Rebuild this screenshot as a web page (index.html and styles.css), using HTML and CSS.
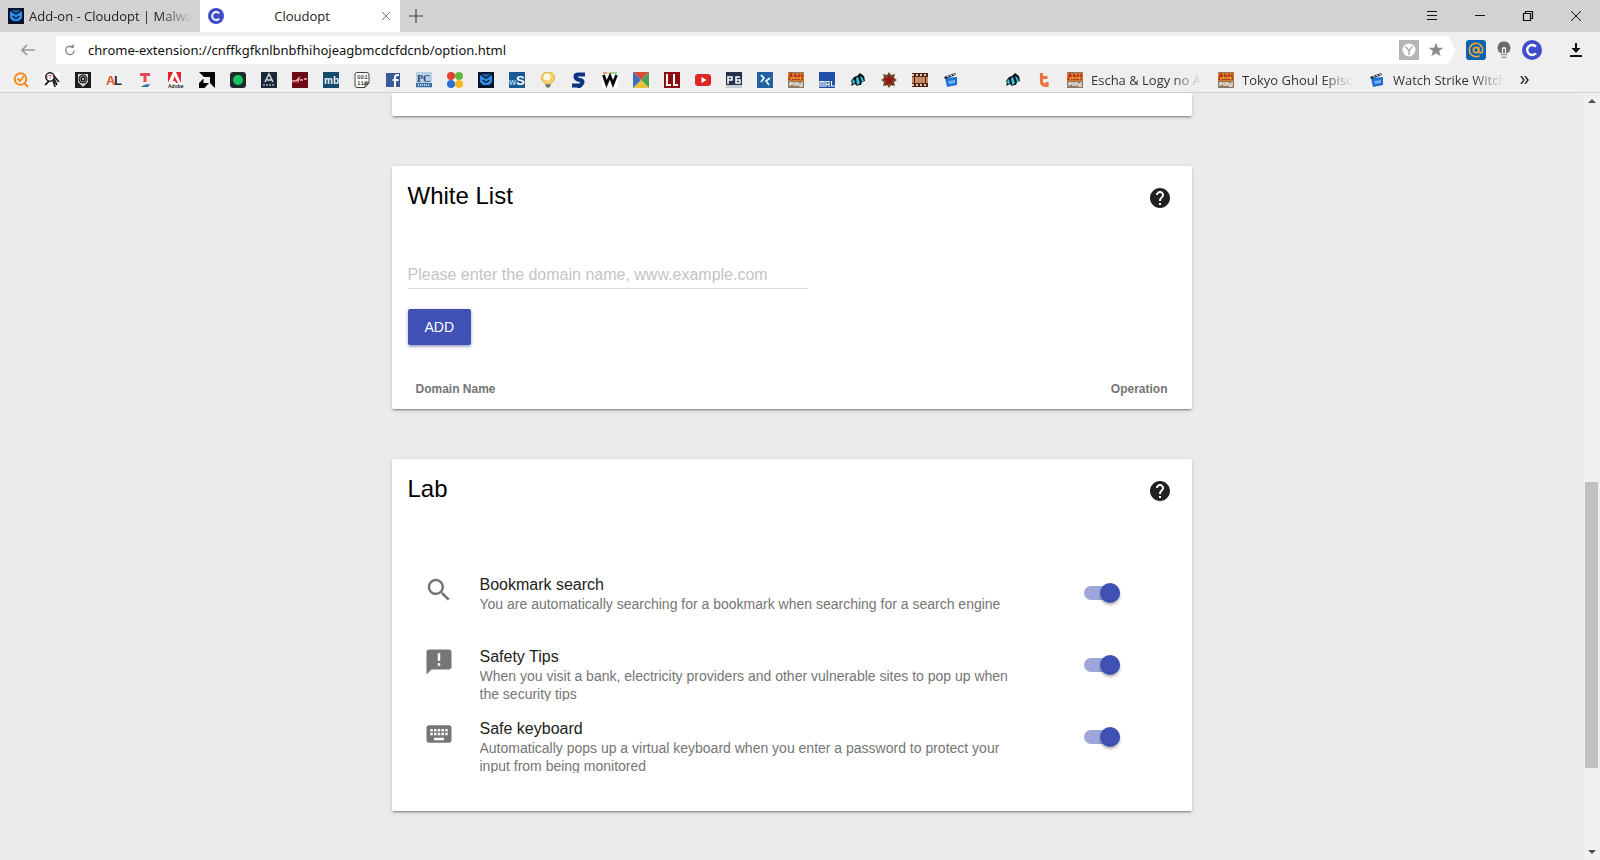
FILE: index.html
```html
<!DOCTYPE html>
<html lang="en">
<head>
    <meta charset="UTF-8">
    <meta name="viewport" content="width=device-width, initial-scale=1.0">
    <title>Cloudopt</title>
    <link rel="stylesheet" href="styles.css">
</head>
<body>

    <!-- Shared icons -->
    <svg class="defs" aria-hidden="true">
        <symbol id="i-cloudopt" viewBox="0 0 16 16">
            <circle cx="8" cy="8" r="8" fill="#3f4dcb"/>
            <path d="M11.2 5.4A4 4 0 1 0 11.2 10.6" fill="none" stroke="#fff" stroke-width="1.9"/>
        </symbol>
        <symbol id="i-malware" viewBox="0 0 16 16">
            <rect width="16" height="16" fill="#06142b"/>
            <path d="M2 3l6 4 6-4v7l-3 3H5l-3-3z" fill="#2f8fee"/>
            <path d="M3 2h10L8 5.500z" fill="#1c5fae"/>
            <path d="M4.500 8 8 10.500 11.500 8" fill="none" stroke="#06142b" stroke-width="1.3"/>
        </symbol>
        <symbol id="i-anime" viewBox="0 0 16 16">
            <rect width="16" height="16" fill="#8b7a66"/>
            <rect y="1" width="16" height="8" fill="#d9772b"/>
            <path d="M1 8 3 2l2 6M7 8V3l2 2v3M11 2v6M14 2v6" fill="none" stroke="#b02c12" stroke-width="1.5"/>
            <path d="M2 6h12" stroke="#f5cf4a"/>
            <path d="M2 14v-3h2v2M6 14v-4M8 14v-3h2v3M12 11v3h2v-4" fill="none" stroke="#f1ece2" stroke-width="1.3"/>
        </symbol>
        <symbol id="i-fish" viewBox="0 0 16 16">
            <path d="M1 9 4 5l3-1 3-3 4 3 1 5-3 1-1 3H9l-2 1-2-2-4 2 1-3z" fill="#0a1216"/>
            <path d="M2 9l2-2 1 4-2 1zM6 6l2-1 2 6-1 1-2 1zM10 4l2 1 2 4-2 1z" fill="#35c4dd"/>
        </symbol>
        <symbol id="i-clapper" viewBox="0 0 16 16">
            <path d="M2 6 14 5v8L4 15z" fill="#1f6fd0"/>
            <path d="M1 5 12 1l1 2L2 7z" fill="#23303f"/>
            <path d="M4 4l2 1M7 3l2 1M10 2l2 1" stroke="#e8edf4"/>
            <path d="M5 9l7-1v3l-6 1z" fill="#73b3f4"/>
        </symbol>
        <symbol id="i-help" viewBox="0 0 24 24">
            <path d="M12 2C6.480 2 2 6.480 2 12s4.480 10 10 10 10-4.480 10-10S17.520 2 12 2zm1 17h-2v-2h2v2zm2.070-7.750l-.9.920C13.450 12.900 13 13.500 13 15h-2v-.5c0-1.100.45-2.100 1.170-2.830l1.240-1.260c.37-.36.59-.86.59-1.410 0-1.100-.9-2-2-2s-2 .9-2 2H8c0-2.210 1.790-4 4-4s4 1.790 4 4c0 .88-.36 1.680-.93 2.250z"/>
        </symbol>
    </svg>

    <!-- Tabs -->
    <header class="tab-bar">
        <a class="tab" href="#">
            <svg class="favicon"><use href="#i-malware"/></svg>
            <span class="tab-title fade">Add-on - Cloudopt | Malware</span>
        </a>
        <div class="tab active">
            <svg class="favicon"><use href="#i-cloudopt"/></svg>
            <a class="tab-title centered" href="#">Cloudopt</a>
            <button class="tab-close" aria-label="Close tab">
                <svg width="10" height="10" viewBox="0 0 10 10"><path d="M1 1l8 8M9 1 1 9" stroke="#777"/></svg>
            </button>
        </div>
        <button class="new-tab" aria-label="New tab">
            <svg width="14" height="14" viewBox="0 0 14 14"><path d="M7 0v14M0 7h14" stroke="#444" stroke-width="1.2"/></svg>
        </button>
        <div class="window-buttons">
            <button aria-label="Menu"><svg width="12" height="12" viewBox="0 0 12 12"><path d="M1 1.500h10M1 5.500h10M1 9.500h10" stroke="#111"/></svg></button>
            <button aria-label="Minimize"><svg width="12" height="12" viewBox="0 0 12 12"><path d="M1 5.500h10" stroke="#111"/></svg></button>
            <button aria-label="Restore"><svg width="12" height="12" viewBox="0 0 12 12"><path d="M1.500 3.500h7v7h-7zM3.500 3.500v-2h7v7h-2" fill="none" stroke="#111" stroke-width="1.2"/></svg></button>
            <button aria-label="Close"><svg width="12" height="12" viewBox="0 0 12 12"><path d="M1 1l10 10M11 1 1 11" stroke="#111"/></svg></button>
        </div>
    </header>

    <!-- Address bar -->
    <div class="toolbar">
        <button class="back" aria-label="Back">
            <svg width="16" height="12" viewBox="0 0 16 12"><path d="M15 6H2M7 1 2 6l5 5" fill="none" stroke="#999" stroke-width="1.7"/></svg>
        </button>
        <div class="address">
            <button class="reload" aria-label="Reload">
                <svg width="12" height="12" viewBox="0 0 12 12"><path d="M9.200 3.600A4.200 4.200 0 1 0 10.200 6.400" fill="none" stroke="#888" stroke-width="1.3"/><path d="M5.500 3.800h4.300V0z" fill="#888"/></svg>
            </button>
            <input class="url" type="text" aria-label="Address" value="chrome-extension://cnffkgfknlbnbfhihojeagbmcdcfdcnb/option.html">
            <button aria-label="Protect">
                <svg width="20" height="20" viewBox="0 0 20 20"><rect width="20" height="20" fill="#b4b4b4"/><circle cx="10" cy="10" r="6.500" fill="#fff"/><path d="M6.500 6.500 10 10.500l3.500-4M10 10.500V15" fill="none" stroke="#aaa" stroke-width="1.4"/></svg>
            </button>
            <button aria-label="Bookmark">
                <svg width="16" height="16" viewBox="0 0 16 16"><path d="M8 .8l2 5h5.300l-4.200 3.300 1.600 5.200L8 11.200l-4.700 3.100 1.600-5.200L.7 5.800H6z" fill="#8d8d8d"/></svg>
            </button>
        </div>
        <div class="extensions">
            <button aria-label="Mail">
                <svg width="20" height="20" viewBox="0 0 20 20"><rect width="20" height="20" rx="3" fill="#0d62b4"/><circle cx="10" cy="10" r="2.700" fill="none" stroke="#f3a738" stroke-width="1.7"/><path d="M12.700 7v4.500c0 2.200 4 1.800 4-1.500a6.700 6.700 0 1 0-3.200 5.700" fill="none" stroke="#f3a738" stroke-width="1.6"/></svg>
            </button>
            <button aria-label="Lights">
                <svg width="20" height="20" viewBox="0 0 20 20"><path d="M10 1.500a6.300 6.300 0 0 0-3.500 11.600h7A6.300 6.300 0 0 0 10 1.500z" fill="#6a6a6a"/><path d="M8.500 13V8.500q1.500-1.500 3 0V13" fill="none" stroke="#fff" stroke-width="1.2"/><path d="M6.500 14.500h7M7.500 17.200h5" stroke="#999" stroke-width="1.5"/></svg>
            </button>
            <button aria-label="Cloudopt"><svg width="20" height="20"><use href="#i-cloudopt"/></svg></button>
        </div>
        <button class="downloads" aria-label="Downloads">
            <svg width="20" height="20" viewBox="0 0 20 20"><path d="M10 3v7" stroke="#111" stroke-width="2"/><path d="M5.500 8h9L10 13zM4 15h12v2H4z" fill="#111"/></svg>
        </button>
    </div>

    <!-- Bookmarks -->
    <nav class="bookmarks" aria-label="Bookmarks">
        <a href="#" aria-label="Search"><svg class="favicon" viewBox="0 0 16 16"><circle cx="7.500" cy="7" r="5.800" fill="none" stroke="#f58a1f" stroke-width="2"/><path d="M4.500 6.500 7 9l4-5M11 11l4 4" fill="none" stroke="#f58a1f" stroke-width="2"/></svg></a>
        <a href="#" aria-label="IT"><svg class="favicon" viewBox="0 0 16 16"><rect width="16" height="16" fill="#fff"/><circle cx="6" cy="5" r="4.200" fill="none" stroke="#222" stroke-width="1.6"/><path d="M1 13l4-4M9 8l2 7M10 7l3 6M10 4l5 6" stroke="#222" stroke-width="1.8"/><text x="3" y="7" font-size="6" fill="#c22">IT</text></svg></a>
        <a href="#" aria-label="Camera"><svg class="favicon" viewBox="0 0 16 16"><rect width="16" height="16" fill="#1b1d1f"/><path d="M3 2h10v8l-5 5-5-5z" fill="#d8dadb"/><circle cx="8" cy="7" r="4.500" fill="#1b1d1f"/><circle cx="8" cy="7" r="3" fill="none" stroke="#aaa" stroke-width=".8"/><circle cx="8" cy="7" r="1" fill="#ddd"/></svg></a>
        <a href="#" aria-label="AL"><svg class="favicon" viewBox="0 0 16 16"><text x="0" y="13" class="f-bold" font-size="13" fill="#e2542a">A</text><text x="8" y="13" class="f-bold" font-size="13" fill="#2a2a2a">L</text></svg></a>
        <a href="#" aria-label="T"><svg class="favicon" viewBox="0 0 16 16"><path d="M3 1h10v3H9.500v6h-3V4H3z" fill="#e44a5b"/><path d="M4 15q3-3 9-3l-2 3z" fill="#2b77a8"/></svg></a>
        <a href="#" aria-label="Adobe"><svg class="favicon" viewBox="0 0 16 16"><rect width="14" height="16" fill="#fff"/><path d="M0 0h5L0 11zM8 0h5v11zM6.500 4 10 11H8L7 9H5z" fill="#e3242b"/><text x="0" y="16" class="f-bold" font-size="5" fill="#111">Adobe</text></svg></a>
        <a href="#" aria-label="AMD"><svg class="favicon" viewBox="0 0 16 16"><path d="M0 0h16v16l-5-5V5H5zM4.500 6.500V11H10l-4.500 5H0v-5z" fill="#050505"/></svg></a>
        <a href="#" aria-label="Status"><svg class="favicon" viewBox="0 0 16 16"><rect width="16" height="16" rx="3" fill="#212a2a"/><circle cx="8" cy="8" r="5" fill="#15c463"/></svg></a>
        <a href="#" aria-label="A"><svg class="favicon" viewBox="0 0 16 16"><rect width="16" height="16" fill="#1c2838"/><path d="M4 10 8 2l4 8M6 8h5" fill="none" stroke="#d5dade" stroke-width="1.5"/><path d="M2 13h12" stroke="#7c8895" stroke-width="2" stroke-dasharray="2 1"/></svg></a>
        <a href="#" aria-label="News"><svg class="favicon" viewBox="0 0 16 16"><rect width="16" height="16" fill="#6b0b18"/><path d="M0 9h4l3-3-1 4M8 8h3M12 7h3" fill="none" stroke="#f0b9bd" stroke-width="1.3"/><path d="M0 10h7" stroke="#e23c3c"/></svg></a>
        <a href="#" aria-label="mb"><svg class="favicon" viewBox="0 0 16 16"><rect width="16" height="16" fill="#164a6c"/><text x="1" y="12" class="f-bold" font-size="10" fill="#e8f1f6">mb</text></svg></a>
        <a href="#" aria-label="Binary"><svg class="favicon" viewBox="0 0 16 16"><path d="M3 .5h10Q15 .5 15 3v8l-4 4.500H3Q1 15.500 1 13V3Q1 .5 3 .5zM15 11h-4v4" fill="#fff" stroke="#444"/><text x="3" y="7" class="f-mono" font-size="6">001</text><text x="3" y="13" class="f-mono" font-size="6">110</text></svg></a>
        <a href="#" aria-label="Facebook"><svg class="favicon" viewBox="0 0 16 16"><rect x="1" y="1" width="14" height="14" fill="#3b5998"/><path d="M10 15V5.500Q10 3 12.500 3H14M7.500 8H13.500" fill="none" stroke="#fff" stroke-width="2"/></svg></a>
        <a href="#" aria-label="PC Forum"><svg class="favicon" viewBox="0 0 16 16"><rect width="16" height="16" fill="#b8d0e6"/><text x="1" y="10" class="f-serif" font-size="10" fill="#1d4572">PC</text><rect y="11" width="16" height="4" fill="#41709e"/><path d="M2 13h12" stroke="#c8dbed" stroke-width="2" stroke-dasharray="1 1"/></svg></a>
        <a href="#" aria-label="Clover"><svg class="favicon" viewBox="0 0 16 16"><circle cx="4" cy="4" r="4" fill="#e63e2e"/><circle cx="12" cy="4" r="4" fill="#61b93a"/><circle cx="4" cy="12" r="4" fill="#2d6fd0"/><circle cx="12" cy="12" r="4" fill="#f5b81f"/><circle cx="8" cy="8" r="1.500" fill="#fff"/></svg></a>
        <a href="#" aria-label="Malware tips"><svg class="favicon"><use href="#i-malware"/></svg></a>
        <a href="#" aria-label="wS"><svg class="favicon" viewBox="0 0 16 16"><rect width="16" height="16" fill="#175a94"/><text x="0" y="13" class="f-bold" font-size="9" fill="#9fd0f2">w</text><text x="7" y="13" class="f-bold" font-size="13" fill="#fff">S</text></svg></a>
        <a href="#" aria-label="Ideas"><svg class="favicon" viewBox="0 0 16 16"><path d="M8 0a6.500 5.800 0 0 0-4 10.500l1.500 2h5l1.500-2A6.500 5.800 0 0 0 8 0z" fill="#f6cf6b" stroke="#dda63c" stroke-width=".8"/><circle cx="7" cy="5" r="3.500" fill="#fff8dc"/><path d="M5.500 12h5v2.500L8 16l-2.500-1.500z" fill="#777"/></svg></a>
        <a href="#" aria-label="S"><svg class="favicon" viewBox="0 0 16 16"><path d="M14 2.500H7.500Q4 2.500 4.500 5T9 8t1.500 4-3.500 1.500H1" fill="none" stroke="#0d3384" stroke-width="4"/></svg></a>
        <a href="#" aria-label="W"><svg class="favicon" viewBox="0 0 16 16"><rect width="16" height="16" fill="#fff"/><path d="M1 1h4" stroke="#d33"/><path d="M5 1h4" stroke="#e6c31c"/><path d="M9 1h6" stroke="#39a03d"/><path d="M1.500 3 4.500 12 8 4l3 8 3.500-9" fill="none" stroke="#080808" stroke-width="2.8"/></svg></a>
        <a href="#" aria-label="Diamond"><svg class="favicon" viewBox="0 0 16 16"><path d="M0 0h16L8 8z" fill="#d84b3e"/><path d="M16 0v16L8 8z" fill="#4d9f52"/><path d="M0 16h16L8 8z" fill="#edc237"/><path d="M0 0v16l8-8z" fill="#3c6fc0"/></svg></a>
        <a href="#" aria-label="LL"><svg class="favicon" viewBox="0 0 16 16"><rect width="16" height="16" fill="#8e0f14"/><path d="M3 2v11h4M10 2v11h4" fill="none" stroke="#fff" stroke-width="2"/></svg></a>
        <a href="#" aria-label="YouTube"><svg class="favicon" viewBox="0 0 16 16"><rect y="2" width="16" height="12" rx="3" fill="#dd2727"/><path d="M6.500 5v6l5-3z" fill="#fff"/></svg></a>
        <a href="#" aria-label="PB"><svg class="favicon" viewBox="0 0 16 16"><rect width="16" height="16" fill="#24334c"/><rect y="13" width="16" height="3" fill="#c9ced5"/><path d="M2 12V5h4v3H2M14 5h-4v6h4V8h-4" fill="none" stroke="#fff" stroke-width="1.5"/></svg></a>
        <a href="#" aria-label="Arrows"><svg class="favicon" viewBox="0 0 16 16"><rect width="16" height="16" fill="#22609f"/><path d="M4 3l3 3-3 4M13 6l-4 3 3 4" fill="none" stroke="#e6f0fa" stroke-width="1.8"/></svg></a>
        <a href="#" aria-label="Anime"><svg class="favicon"><use href="#i-anime"/></svg></a>
        <a href="#" aria-label="MAL"><svg class="favicon" viewBox="0 0 16 16"><rect width="16" height="16" fill="#2150a7"/><path d="M1 15V9.500h4V15M3 10v5M7 15V9.500h3V15M7 12.500h3M12.500 9v5H16" fill="none" stroke="#fff" stroke-width="1.1"/></svg></a>
        <a href="#" aria-label="Fish"><svg class="favicon"><use href="#i-fish"/></svg></a>
        <a href="#" aria-label="Star"><svg class="favicon" viewBox="0 0 16 16"><path d="M8 0l2 3 4-1-1 4 3 2-3 2 1 4-4-1-2 3-2-3-4 1 1-4-3-2 3-2-1-4 4 1z" fill="#6b4a2c"/><path d="M8 2l1.500 4L14 6l-3.500 3 1.500 5-4-3-4 3 1.500-5L2 6h4.500z" fill="#9c1414"/></svg></a>
        <a href="#" aria-label="Film"><svg class="favicon" viewBox="0 0 16 16"><rect y="1" width="16" height="14" fill="#4d2214"/><rect x="3" y="5" width="10" height="6" fill="#c78a66"/><path d="M0 3h16M0 13h16" stroke="#e9c9ae" stroke-width="2" stroke-dasharray="2 2"/><path d="M1 5v6M15 5v6" stroke="#c78a66" stroke-width="2"/></svg></a>
        <a href="#" aria-label="Video"><svg class="favicon"><use href="#i-clapper"/></svg></a>
        <span class="favicon"></span>
        <a href="#" aria-label="Fish"><svg class="favicon"><use href="#i-fish"/></svg></a>
        <a href="#" aria-label="t"><svg class="favicon" viewBox="0 0 16 16"><path d="M5.500 1v8.500q0 4 5.500 4V10M4 5.500h7.500" fill="none" stroke="#ee7440" stroke-width="3.2"/></svg></a>
        <a class="labelled" href="#"><svg class="favicon"><use href="#i-anime"/></svg><span class="fade">Escha &amp; Logy no At</span></a>
        <a class="labelled" href="#"><svg class="favicon"><use href="#i-anime"/></svg><span class="fade">Tokyo Ghoul Episod</span></a>
        <a class="labelled" href="#"><svg class="favicon"><use href="#i-clapper"/></svg><span class="fade">Watch Strike Witche</span></a>
        <button class="more" aria-label="More bookmarks">
            <svg width="10" height="8" viewBox="0 0 10 8"><path d="M1 0l3 4-3 4M5 0l3 4-3 4" fill="none" stroke="#222" stroke-width="1.4"/></svg>
        </button>
    </nav>

    <div class="viewport">
        <main class="page">
            <section class="card card-end"></section>

            <section class="card">
                <div class="card-header">
                    <h2>White List</h2>
                    <button class="help" aria-label="White List help"><svg><use href="#i-help"/></svg></button>
                </div>
                <form class="domain-form">
                    <input type="text" aria-label="Domain name" placeholder="Please enter the domain name, www.example.com">
                    <button type="button">ADD</button>
                </form>
                <table class="domains">
                    <thead>
                        <tr><th>Domain Name</th><th>Operation</th></tr>
                    </thead>
                </table>
            </section>

            <section class="card">
                <div class="card-header">
                    <h2>Lab</h2>
                    <button class="help" aria-label="Lab help"><svg><use href="#i-help"/></svg></button>
                </div>
                <ul class="options">
                    <li>
                        <svg class="option-icon" viewBox="0 0 24 24"><path d="M15.500 14h-.79l-.28-.27C15.410 12.590 16 11.110 16 9.500 16 5.910 13.090 3 9.500 3S3 5.910 3 9.500 5.910 16 9.500 16c1.610 0 3.090-.59 4.230-1.570l.27.28v.79l5 4.990L20.490 19l-4.990-5zm-6 0C7.010 14 5 11.990 5 9.500S7.010 5 9.500 5 14 7.010 14 9.500 11.990 14 9.500 14z"/></svg>
                        <label for="bookmark-search">
                            <span class="option-title">Bookmark search</span>
                            <span class="option-text">You are automatically searching for a bookmark when searching for a search engine</span>
                        </label>
                        <input class="switch" type="checkbox" id="bookmark-search" checked>
                    </li>
                    <li>
                        <svg class="option-icon" viewBox="0 0 24 24"><path d="M20 2H4c-1.100 0-1.990.9-1.990 2L2 22l4-4h14c1.100 0 2-.9 2-2V4c0-1.100-.9-2-2-2zm-7 13h-2v-2h2v2zm0-4h-2V5h2v6z"/></svg>
                        <label for="safety-tips">
                            <span class="option-title">Safety Tips</span>
                            <span class="option-text">When you visit a bank, electricity providers and other vulnerable sites to pop up when the security tips</span>
                        </label>
                        <input class="switch" type="checkbox" id="safety-tips" checked>
                    </li>
                    <li>
                        <svg class="option-icon" viewBox="0 0 24 24"><path d="M20 5H4c-1.100 0-1.990.9-1.990 2L2 17c0 1.100.9 2 2 2h16c1.100 0 2-.9 2-2V7c0-1.100-.9-2-2-2zm-9 3h2v2h-2V8zm0 3h2v2h-2v-2zM8 8h2v2H8V8zm0 3h2v2H8v-2zm-1 2H5v-2h2v2zm0-3H5V8h2v2zm9 7H8v-2h8v2zm0-4h-2v-2h2v2zm0-3h-2V8h2v2zm3 3h-2v-2h2v2zm0-3h-2V8h2v2z"/></svg>
                        <label for="safe-keyboard">
                            <span class="option-title">Safe keyboard</span>
                            <span class="option-text">Automatically pops up a virtual keyboard when you enter a password to protect your input from being monitored</span>
                        </label>
                        <input class="switch" type="checkbox" id="safe-keyboard" checked>
                    </li>
                </ul>
            </section>
        </main>

        <div class="scrollbar" aria-hidden="true">
            <svg width="8" height="4" viewBox="0 0 8 4"><path d="M0 4 4 0l4 4z" fill="#505050"/></svg>
            <div class="scroll-track"><div class="scroll-thumb"></div></div>
            <svg width="8" height="4" viewBox="0 0 8 4"><path d="M0 0h8L4 4z" fill="#505050"/></svg>
        </div>
    </div>

</body>
</html>
```
FILE: styles.css
```css
* {
    box-sizing: border-box;
}

body {
    margin: 0;
    height: 100vh;
    display: flex;
    flex-direction: column;
    overflow: hidden;
    font-family: "Open Sans", "Noto Sans", sans-serif;
    font-size: 13px;
    color: #222;
    background-color: #ebebeb;
}

button {
    display: flex;
    align-items: center;
    justify-content: center;
    padding: 0;
    border: none;
    background: none;
    cursor: pointer;
}

a {
    color: inherit;
    text-decoration: none;
}

svg {
    display: block;
    flex: none;
}

.defs {
    display: none;
}

.favicon {
    flex: none;
    width: 16px;
    height: 16px;
}

.f-bold {
    font-family: "Liberation Sans", sans-serif;
    font-weight: bold;
}

.f-mono {
    font-family: "Liberation Mono", monospace;
}

.f-serif {
    font-family: "Liberation Serif", serif;
    font-weight: bold;
}

/* Long titles fade out instead of ending in dots */
.fade {
    flex: 1;
    min-width: 0;
    overflow: hidden;
    white-space: nowrap;
    -webkit-mask-image: linear-gradient(to left, transparent, #000 32px);
    mask-image: linear-gradient(to left, transparent, #000 32px);
}

/* Tab bar */
.tab-bar {
    flex: none;
    display: flex;
    height: 32px;
    background-color: #d2d2d2;
}

.tab {
    display: flex;
    align-items: center;
    width: 200px;
    padding: 0 8px;
    gap: 5px;
}

.tab.active {
    background-color: #fff;
}

.tab-title.centered {
    flex: 1;
    text-align: center;
}

.tab-close {
    width: 12px;
    height: 16px;
}

.new-tab {
    width: 32px;
}

.window-buttons {
    display: flex;
    margin-left: auto;
}

.window-buttons button {
    width: 48px;
}

/* Address bar */
.toolbar {
    flex: none;
    display: flex;
    align-items: center;
    height: 36px;
    padding-right: 14px;
    background-color: #efefef;
}

.back {
    width: 56px;
    height: 28px;
}

.address {
    flex: 1;
    display: flex;
    align-items: center;
    gap: 9px;
    height: 28px;
    padding: 0 12px 0 8px;
    background-color: #fff;
    clip-path: polygon(0 0, calc(100% - 8px) 0, 100% 50%, calc(100% - 8px) 100%, 0 100%);
}

.address .reload {
    width: 12px;
}

.url {
    flex: 1;
    padding: 0 3px;
    border: none;
    outline: none;
    font-family: "Noto Sans", sans-serif;
    font-size: 13px;
    color: #111;
    background: none;
}

.extensions {
    display: flex;
    gap: 8px;
    margin: 0 24px 0 10px;
}

/* Bookmarks bar */
.bookmarks {
    flex: none;
    display: flex;
    align-items: center;
    gap: 15px;
    height: 25px;
    padding: 0 13px;
    border-bottom: 1px solid #cfcfcf;
    background-color: #efefef;
}

.labelled {
    display: flex;
    align-items: center;
    gap: 8px;
    width: 136px;
    color: #333;
}

.more {
    width: 10px;
}

/* Options page */
.viewport {
    flex: 1;
    min-height: 0;
    display: flex;
    overflow: hidden;
}

.page {
    flex: 1;
    display: flex;
    flex-direction: column;
    align-items: center;
    gap: 50px;
    font-family: "Liberation Sans", Arial, sans-serif;
}

.card {
    width: 100%;
    max-width: 800px;
    background-color: #fff;
    border-radius: 2px;
    box-shadow: 0 2px 2px 0 rgba(0, 0, 0, 0.14), 0 3px 1px -2px rgba(0, 0, 0, 0.2), 0 1px 5px 0 rgba(0, 0, 0, 0.12);
}

.card-end {
    height: 23px;
    flex: none;
}

.card-header {
    display: flex;
    align-items: center;
    justify-content: space-between;
    padding: 16px 16px 0;
}

.card-header h2 {
    margin: 0 0 5px;
    font-size: 24px;
    font-weight: normal;
    line-height: 27px;
    color: #000;
}

.help {
    width: 32px;
    height: 32px;
}

.help svg {
    width: 24px;
    height: 24px;
    fill: #212121;
}

/* White list */
.domain-form {
    padding: 46px 16px 0;
}

.domain-form input {
    display: block;
    width: 400px;
    max-width: 100%;
    height: 29px;
    padding: 6px 0 4px;
    border: none;
    border-bottom: 1px solid #dcdcdc;
    outline: none;
    font-family: inherit;
    font-size: 16px;
    background: none;
}

.domain-form input::placeholder {
    color: #c4c4c4;
}

.domain-form button {
    height: 36px;
    margin-top: 20px;
    padding: 0 17px;
    border-radius: 2px;
    font-family: inherit;
    font-size: 14px;
    color: #fff;
    background-color: #3f51b5;
    box-shadow: 0 2px 2px 0 rgba(63, 81, 181, 0.3), 0 1px 4px 0 rgba(0, 0, 0, 0.2);
}

.domains {
    width: 100%;
    padding: 36px 24px 11px;
    border-spacing: 0;
}

.domains th {
    padding: 0;
    font-size: 12px;
    line-height: 17px;
    text-align: left;
    color: #757575;
}

.domains th:last-child {
    text-align: right;
}

/* Lab */
.options {
    display: flex;
    flex-direction: column;
    gap: 18px;
    margin: 0;
    padding: 68px 72px 38px 32px;
    list-style: none;
}

.options li {
    display: flex;
    height: 54px;
}

.option-icon {
    width: 30px;
    height: 30px;
    margin-right: 26px;
    fill: #757575;
}

.options label {
    flex: 1;
    max-width: 540px;
    overflow: hidden;
}

.option-title,
.option-text {
    display: block;
}

.option-title {
    font-size: 16px;
    line-height: 20px;
    color: #212121;
}

.option-text {
    font-size: 14px;
    line-height: 18px;
    color: #757575;
}

.switch {
    appearance: none;
    flex: none;
    display: flex;
    align-items: center;
    width: 36px;
    height: 14px;
    margin: 11px 0 0 auto;
    border-radius: 7px;
    background-color: #bdbdbd;
    cursor: pointer;
}

.switch::before {
    content: "";
    flex: none;
    width: 20px;
    height: 20px;
    border-radius: 50%;
    background-color: #fafafa;
    box-shadow: 0 2px 3px rgba(0, 0, 0, 0.3);
}

.switch:checked {
    justify-content: flex-end;
    background-color: #9fa8da;
}

.switch:checked::before {
    background-color: #3f51b5;
}

/* Scrollbar */
.scrollbar {
    display: flex;
    flex-direction: column;
    align-items: center;
    width: 17px;
    padding: 6px 2px;
    background-color: #f0f0f0;
}

.scroll-track {
    flex: 1;
    display: flex;
    flex-direction: column;
    justify-content: flex-end;
    width: 100%;
    padding-bottom: 82px;
}

.scroll-thumb {
    height: 43%;
    background-color: #c1c1c1;
}
```
